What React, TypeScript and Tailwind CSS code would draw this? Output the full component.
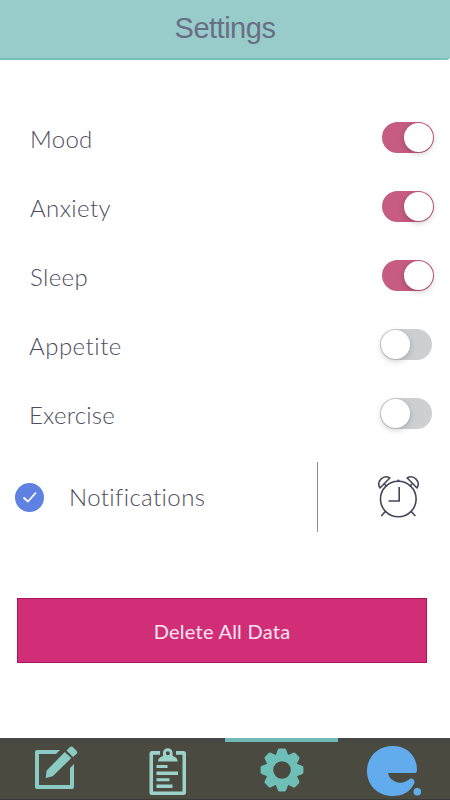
import React, { useState } from 'react'
import clsx from 'clsx'

type Setting = {
  name: string
  enabled: boolean
  className: string
}

const initialSettings: Setting[] = [
  { name: 'Mood', enabled: true, className: 'pl-[30px] tracking-[0.3px]' },
  { name: 'Anxiety', enabled: true, className: 'pl-[30px] tracking-[0.4px]' },
  { name: 'Sleep', enabled: true, className: 'pl-[30px] tracking-[0.4px]' },
  { name: 'Appetite', enabled: false, className: 'pl-[29px] tracking-[0.5px]' },
  { name: 'Exercise', enabled: false, className: 'pl-[29px] tracking-[0.2px]' },
]

function Toggle({ label, on, onToggle }: { label: string; on: boolean; onToggle: () => void }) {
  return (
    <button
      type="button"
      role="switch"
      aria-checked={on}
      aria-label={label}
      onClick={onToggle}
      className={clsx(
        'flex h-[31px] w-[52px] items-center rounded-full px-px',
        on ? 'mr-4 justify-end bg-[#c65c82]' : 'mr-[18px] justify-start bg-[#cdcfd1]'
      )}
    >
      <span className="h-[29px] w-[29px] rounded-full bg-white shadow-[0_2px_6px_rgba(0,0,0,0.2)]" />
    </button>
  )
}

function AlarmIcon() {
  return (
    <svg width="44" height="44" viewBox="0 0 44 44" fill="none" stroke="#46465a" strokeWidth="1.6">
      <circle cx="22.3" cy="24" r="17.8" />
      <path d="M23.2 12v14H12.5" />
      <path d="M4 13A7.2 7.2 0 0 1 13.8 3Z" strokeLinejoin="round" />
      <path d="M41 13A7.2 7.2 0 0 0 31.2 3Z" strokeLinejoin="round" />
      <path d="M9.3 36.5l-4 4.500M35.3 36.5l4 4.500M8.5 9l2.500 2.500M36 9l-2.500 2.500" />
      <circle cx="22.3" cy="5.6" r="1.2" fill="#46465a" stroke="none" />
    </svg>
  )
}

function EditIcon() {
  return (
    <svg width="44" height="44" viewBox="0 0 44 44" fill="#8acbc4" overflow="visible">
      <path d="M3 3h23l-4 4H5v31h31V21l4-4v23a2 2 0 0 1-2 2H3a2 2 0 0 1-2-2V5a2 2 0 0 1 2-2Z" />
      <path d="M11.7 31l1-7.500L30.800 5l6.500 6L18.700 29.300Z" />
      <path d="M32.500 3.600L36 .1a2 2 0 0 1 2.800 0L42.700 3.900a2 2 0 0 1 0 2.800L39 10Z" />
    </svg>
  )
}

function ClipboardIcon() {
  return (
    <svg width="38" height="48" viewBox="0 0 38 48" fill="#9bd3cb">
      <path d="M11 3H3a2.500 2.500 0 0 0-2.500 2.500v39A2.500 2.500 0 0 0 3 47h31.500a2.500 2.500 0 0 0 2.500-2.500v-39A2.500 2.500 0 0 0 34.500 3H27v3.700h6.500v36.800H4V6.700h7Z" />
      <path
        fillRule="evenodd"
        d="M9 13.500c0-3 1.500-4 5-5.500V5a4.800 4.800 0 0 1 9.600 0v3c3.500 1.500 5 2.500 5 5.500ZM18.800 3.300a2 2 0 1 0 0 4 2 2 0 0 0 0-4Z"
      />
      <path d="M7.500 17H18.500v3H7.500ZM7.500 23.500H29v3.500H7.500ZM7.500 30.200H20.500v3H7.500ZM7.500 36.500H23.500v3.500H7.500Z" />
    </svg>
  )
}

function GearIcon() {
  return (
    <svg width="44" height="44" viewBox="-22 -22 44 44" fill="#6dbfb8">
      <circle r="12.600" fill="none" stroke="#6dbfb8" strokeWidth="7.600" />
      {[0, 45, 90, 135, 180, 225, 270, 315].map(angle => (
        <path
          key={angle}
          transform={`rotate(${angle})`}
          d="M-6.500-14L-4.300-20Q-3.900-21.400-2.600-21.400H2.600Q3.900-21.400 4.300-20L6.500-14Z"
        />
      ))}
    </svg>
  )
}

function LogoIcon() {
  return (
    <svg width="56" height="52" viewBox="0 0 56 52" fill="#62aced">
      <path d="M27 1C12 1 1 11.500 1 26c0 14.500 11 25 26 25 10 0 17.500-4.500 21.200-12.500 1.500-3.500-2.200-6.500-5.200-4C40 37 36 38.300 32 37.500c-5-1-9-4.500-10-9.500h26.500c1.800 0 2.500-1.200 2.500-3C51 10.500 40.500 1 27 1Z" />
      <circle cx="51.300" cy="46.700" r="3.800" />
    </svg>
  )
}

const tabs = [
  { name: 'Journal', icon: <EditIcon />, className: 'pt-[5px]' },
  { name: 'Log', icon: <ClipboardIcon />, className: 'pt-1.5 pr-[2px]' },
  { name: 'Settings', icon: <GearIcon />, className: 'pt-1.5 pl-px' },
  { name: 'Profile', icon: <LogoIcon />, className: 'pt-[3px] pl-px' },
]

function App() {
  const [settings, setSettings] = useState(initialSettings)
  const [notifications, setNotifications] = useState(true)
  const [activeTab, setActiveTab] = useState('Settings')

  const toggle = (name: string) => {
    setSettings(settings.map(s => (s.name === name ? { ...s, enabled: !s.enabled } : s)))
  }

  return (
    <div className="flex h-[800px] w-[450px] flex-col overflow-hidden bg-white font-['Lato','Open_Sans',sans-serif] text-[#4e4e60]">
      {/* Header */}
      <header className="h-[60px] shrink-0 rounded-br-sm border-b-2 border-[#77c1b9] bg-[#98ccca] pt-[10px] text-center">
        <h1 className="font-['Liberation_Sans',Arial,sans-serif] text-[29px] leading-9 tracking-[-0.5px] text-[#686f83]">
          Settings
        </h1>
      </header>

      <main className="flex flex-1 flex-col pt-[43px]">
        {/* Tracked categories */}
        {settings.map(setting => (
          <div key={setting.name} className="flex h-[69px] shrink-0 items-center justify-between">
            <span className={clsx('pt-0.5 text-2xl font-light', setting.className)}>{setting.name}</span>
            <Toggle label={setting.name} on={setting.enabled} onToggle={() => toggle(setting.name)} />
          </div>
        ))}

        {/* Notifications */}
        <div className="mt-[14px] flex h-[70px] shrink-0 items-center">
          <button
            type="button"
            role="checkbox"
            aria-checked={notifications}
            aria-label="Notifications"
            onClick={() => setNotifications(!notifications)}
            className={clsx(
              'ml-[15px] flex h-[29px] w-[29px] items-center justify-center rounded-full',
              notifications ? 'bg-[#5f82e2]' : 'bg-[#cdcfd1]'
            )}
          >
            <svg width="16" height="14" viewBox="0 0 16 14" fill="none" stroke="white" strokeWidth="1.700">
              <path d="M1.500 7.500L6 11.500L14 2.500" />
            </svg>
          </button>
          <span className="ml-[25px] w-[248px] text-2xl font-light tracking-[0.4px]">Notifications</span>
          <div className="h-full w-px bg-[#8b8b8f]" />
          <button type="button" aria-label="Set reminder time" className="ml-[58px]">
            <AlarmIcon />
          </button>
        </div>

        <button
          type="button"
          className="mt-[66px] mr-[23px] ml-[17px] h-[65px] border border-[#a81558] bg-[#d12e77] text-xl tracking-[0.25px] text-[#fde4f2]"
        >
          Delete All Data
        </button>
      </main>

      {/* Tab bar */}
      <nav className="grid h-[62px] shrink-0 grid-cols-4 border-b border-[#3a3a38] bg-[#4a4a41]">
        {tabs.map(tab => (
          <button
            key={tab.name}
            type="button"
            aria-label={tab.name}
            onClick={() => setActiveTab(tab.name)}
            className={clsx(
              'flex items-start justify-center border-t-4',
              activeTab === tab.name ? 'border-[#6fbab4]' : 'border-[#464645]'
            )}
          >
            <span className={tab.className}>{tab.icon}</span>
          </button>
        ))}
      </nav>
    </div>
  )
}

export default App
